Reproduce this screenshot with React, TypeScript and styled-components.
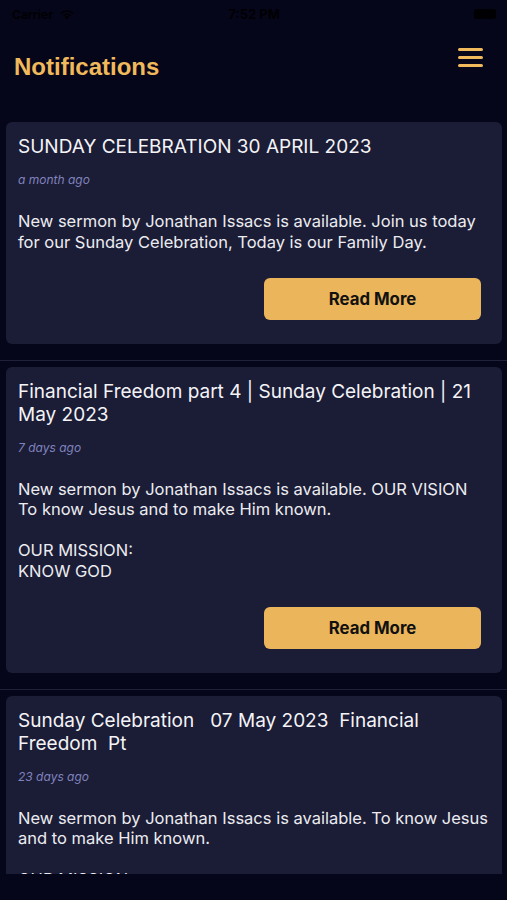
import React from "react";
import styled, { createGlobalStyle } from "styled-components";

const Global = createGlobalStyle`
  html, body { margin: 0; padding: 0; background: #06061a; }
  body { font-family: Inter, "Liberation Sans", Arial, sans-serif; }
  * { box-sizing: border-box; }
`;

const Page = styled.div`
  width: 507px;
  height: 900px;
  background: #06061a;
  display: flex;
  flex-direction: column;
  overflow: hidden;
`;

const StatusBar = styled.div`
  height: 28px;
  display: flex;
  align-items: center;
  justify-content: space-between;
  padding: 0 11px 0 12px;
  color: #000003;
  font-size: 12px;
  font-weight: 700;
`;

const StatusLeft = styled.div`
  display: flex;
  align-items: center;
  gap: 6px;
  width: 120px;
`;

const StatusTime = styled.div`
  font-size: 13px;
`;

const StatusRight = styled.div`
  width: 120px;
  display: flex;
  justify-content: flex-end;
`;

const Battery = styled.div`
  width: 22px;
  height: 10px;
  border-radius: 2px;
  background: #000003;
`;

const Header = styled.header`
  height: 88px;
  display: flex;
  justify-content: space-between;
  align-items: flex-start;
  padding: 0 24px 0 14px;
`;

const Title = styled.h1`
  margin: 25px 0 0;
  font-family: "Liberation Sans", Arial, sans-serif;
  font-size: 24px;
  line-height: 28px;
  font-weight: 700;
  color: #f0b95b;
`;

const MenuButton = styled.button`
  margin-top: 20px;
  width: 25px;
  height: 19px;
  padding: 0;
  border: 0;
  background: transparent;
  display: flex;
  flex-direction: column;
  justify-content: space-between;
`;

const MenuBar = styled.span`
  display: block;
  width: 25px;
  height: 3.4px;
  border-radius: 2px;
  background: #f0b95b;
`;

const List = styled.div`
  flex: 1;
  overflow: hidden;
`;

const Item = styled.div`
  padding: 6px 5px 16px 6px;
  border-bottom: 1px solid #20213a;
`;

const Card = styled.article`
  background: #1b1c36;
  border-radius: 6px;
  padding: 13px 12px 24px 12px;
  display: flex;
  flex-direction: column;
`;

const CardTitle = styled.h2`
  margin: 0;
  font-size: 19px;
  line-height: 23px;
  font-weight: 400;
  color: #f4f4f6;
  white-space: pre-wrap;
`;

const Time = styled.div`
  margin-top: 14px;
  font-size: 12px;
  line-height: 15px;
  font-style: italic;
  color: #8083bd;
`;

const Body = styled.p`
  margin: 24px 0 0;
  font-size: 16.5px;
  line-height: 20.5px;
  color: #ececf0;
  white-space: pre-line;
`;

const ReadMore = styled.button`
  align-self: flex-end;
  margin: 25.5px 9px 0 0;
  width: 217px;
  height: 42px;
  border: 0;
  border-radius: 6px;
  background: #ebb55b;
  color: #111;
  font-family: Inter, "Liberation Sans", Arial, sans-serif;
  font-size: 16.8px;
  font-weight: 700;
`;

const BottomSpace = styled.div`
  height: 26px;
  background: #06061a;
`;

const notifications = [
  {
    title: "SUNDAY CELEBRATION 30 APRIL 2023",
    time: "a month ago",
    body:
      "New sermon by Jonathan Issacs is available. Join us today for our Sunday Celebration, Today is our Family Day.",
  },
  {
    title: "Financial Freedom part 4 | Sunday Celebration | 21 May 2023",
    time: "7 days ago",
    body:
      "New sermon by Jonathan Issacs is available. OUR VISION To know Jesus and to make Him known.\n\nOUR MISSION:\nKNOW GOD",
  },
  {
    title: "Sunday Celebration   07 May 2023  Financial Freedom  Pt",
    time: "23 days ago",
    body:
      "New sermon by Jonathan Issacs is available. To know Jesus and to make Him known.\n\nOUR MISSION:\nKNOW GOD",
  },
];

export default function App() {
  return (
    <>
      <Global />
      <Page>
        <StatusBar>
          <StatusLeft>
            <span>Carrier</span>
            <svg width="16" height="12" viewBox="0 0 16 12" fill="#000003">
              <path d="M8 11.5 10.3 9a3.3 3.3 0 0 0-4.6 0L8 11.5Z" />
              <path d="M3.9 7.2 5 8.4a4.3 4.3 0 0 1 6 0l1.1-1.2a5.9 5.9 0 0 0-8.2 0Z" />
              <path d="M1.6 4.8 2.7 6a7.5 7.5 0 0 1 10.6 0l1.1-1.2a9.1 9.1 0 0 0-12.8 0Z" />
            </svg>
          </StatusLeft>
          <StatusTime>7:52 PM</StatusTime>
          <StatusRight>
            <Battery />
          </StatusRight>
        </StatusBar>
        <Header>
          <Title>Notifications</Title>
          <MenuButton aria-label="Menu">
            <MenuBar />
            <MenuBar />
            <MenuBar />
          </MenuButton>
        </Header>
        <List>
          {notifications.map((n, i) => (
            <Item key={i}>
              <Card>
                <CardTitle>{n.title}</CardTitle>
                <Time>{n.time}</Time>
                <Body>{n.body}</Body>
                <ReadMore>Read More</ReadMore>
              </Card>
            </Item>
          ))}
        </List>
        <BottomSpace />
      </Page>
    </>
  );
}
